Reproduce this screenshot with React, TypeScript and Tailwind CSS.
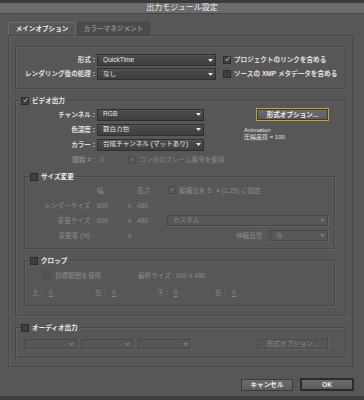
import React from 'react';
import clsx from 'clsx';

// Small building blocks of the dark dialog
const Arrow: React.FC<{ dim?: boolean }> = ({ dim }) => (
  <svg width="5" height="3" viewBox="0 0 5 3">
    <path d="M0 0 L5 0 L2.5 3 Z" fill={dim ? '#7a7a7a' : '#e8e8e8'} />
  </svg>
);

const Select: React.FC<{ value?: string; className: string; disabled?: boolean }> = ({ value, className, disabled }) => (
  <div
    className={clsx(
      'flex items-center border',
      disabled
        ? 'border-[#474747] text-[#8a8a8a] shadow-[1px_1px_0_#626262]'
        : 'border-[#2e2e2e] bg-gradient-to-b from-[#4b4b4b] to-[#3f3f3f] text-[#e8e8e8] shadow-[inset_0_1px_0_#565656]',
      className
    )}
  >
    <span className="flex-1 truncate pl-[5px] leading-none">{value}</span>
    <span className="flex h-full w-[10px] items-center justify-center">
      <Arrow dim={disabled} />
    </span>
  </div>
);

const Check: React.FC<{ checked?: boolean; disabled?: boolean }> = ({ checked, disabled }) => (
  <span
    className={clsx(
      'flex h-[8px] w-[8px] shrink-0 items-center justify-center border',
      disabled ? 'border-[#4c4c4c] bg-[#555555]' : 'border-[#2c2c2c] bg-[#3e3e3e]'
    )}
  >
    {checked && (
      <svg width="8" height="8" viewBox="0 0 8 8" className="-mt-[2px] ml-[1px]">
        <path d="M1 4 L3 6.5 L7.5 0.5" stroke={disabled ? '#8a8a8a' : '#e6e6e6'} strokeWidth="1.2" fill="none" />
      </svg>
    )}
  </span>
);

const Group: React.FC<{ legend?: string; checked?: boolean; className: string; children: React.ReactNode }> = ({
  legend,
  checked,
  className,
  children,
}) => (
  <div className={clsx('relative border border-[#474747] shadow-[inset_1px_1px_0_#616161,1px_1px_0_#616161]', className)}>
    {legend && (
      <div className="absolute -top-[5px] left-[5px] flex items-center gap-[3px] bg-[#575757] pr-[2px]">
        <Check checked={checked} />
        <span className="font-bold text-[#ececec]">{legend}</span>
      </div>
    )}
    {children}
  </div>
);

const Btn: React.FC<{ label: string; className: string; disabled?: boolean; focus?: boolean; gold?: boolean }> = ({
  label,
  className,
  disabled,
  focus,
  gold,
}) => (
  <div
    className={clsx(
      'flex items-center justify-center',
      disabled
        ? 'border border-[#4a4a4a] text-[#8a8a8a] shadow-[1px_1px_0_#626262]'
        : 'bg-gradient-to-b from-[#6c6c6c] to-[#5c5c5c] font-bold text-[#f0f0f0]',
      focus && 'border-2 border-[#2b2b2b]',
      gold && 'border border-[#3a3a3a] outline outline-1 outline-[#c9a030]',
      !disabled && !focus && !gold && 'border border-[#3a3a3a]',
      className
    )}
  >
    {label}
  </div>
);

export default function App() {
  return (
    <div className="flex h-[400px] w-[364px] flex-col overflow-hidden whitespace-nowrap bg-[#575757] font-['Liberation_Sans','Noto_Sans_CJK_JP',sans-serif] text-[6.6px] text-[#e0e0e0]">
      <div className="h-[3px] bg-[#3a3a3a]" />
      <div className="flex h-[11px] items-center justify-center border-b border-[#474747] bg-[#6b6b6b] text-[8px] text-[#f2f2f2]">
        出力モジュール設定
      </div>

      {/* tabs */}
      <div className="mt-[8px] flex h-[13px] pl-[8px]">
        <div className="flex w-[68px] items-center justify-center border-x border-t border-[#6a6a6a] bg-[#575757] font-bold text-[#f0f0f0]">
          メインオプション
        </div>
        <div className="ml-[1px] flex w-[73px] items-center justify-center border-x border-t border-[#444444] bg-[#4b4b4b] font-bold text-[#8e8e8e]">
          カラーマネジメント
        </div>
      </div>

      <div className="mx-[8px] flex h-[332px] w-[345px] flex-col border border-[#474747] px-[6px] pt-[10px] shadow-[inset_1px_1px_0_#636363]">
        {/* format */}
        <Group className="h-[43px] pt-[6px]">
          {[
            ['形式 :', 'QuickTime', 'プロジェクトのリンクを含める', true],
            ['レンダリング後の処理 :', 'なし', 'ソースの XMP メタデータを含める', false],
          ].map(([label, value, cb, on]) => (
            <div key={label as string} className="flex h-[14px] items-center">
              <span className="w-[79px] text-right font-bold">{label as string}</span>
              <Select value={value as string} className="ml-[2px] h-[12px] w-[119px]" />
              <div className="ml-[7px] flex items-center gap-[3px]">
                <Check checked={on as boolean} />
                <span className="font-bold">{cb as string}</span>
              </div>
            </div>
          ))}
        </Group>

        {/* video output */}
        <Group legend="ビデオ出力" checked className="mt-[11px] h-[216px] pt-[6px]">
          <div className="flex">
            <div className="flex w-[188px] shrink-0 flex-col">
              {[
                ['チャンネル :', 'RGB'],
                ['色深度 :', '数百万色'],
                ['カラー :', '合成チャンネル (マットあり)'],
              ].map(([label, value]) => (
                <div key={label} className="flex h-[15px] items-center">
                  <span className="w-[79px] text-right font-bold">{label}</span>
                  <Select value={value} className="ml-[2px] h-[12px] w-[107px]" />
                </div>
              ))}
              <div className="flex h-[15px] items-center text-[#8c8c8c]">
                <span className="w-[79px] shrink-0 text-right font-bold">開始 # :</span>
                <span className="ml-[2px] w-[31px] shrink-0 pl-[3px]">0</span>
                <Check checked disabled />
                <span className="ml-[3px]">コンポのフレーム番号を使用</span>
              </div>
            </div>
            <div className="ml-[40px] flex flex-col">
              <Btn label="形式オプション..." gold className="ml-[13px] mt-[2px] h-[11px] w-[71px]" />
              <div className="mt-[7px] text-[6px] leading-[7px] text-[#e4e4e4]">
                <div>Animation</div>
                <div>圧縮品質 = 100</div>
              </div>
            </div>
          </div>

          {/* resize */}
          <Group legend="サイズ変更" className="ml-[8px] mr-[10px] mt-[9px] h-[73px] pr-[6px] pt-[6px] text-[#8c8c8c]">
            <div className="flex h-[15px] items-center">
              <span className="w-[72px]" />
              <span className="w-[40px]">幅</span>
              <span className="w-[30px]">高さ</span>
              <span className="ml-[1px] flex items-center gap-[3px]">
                <Check checked disabled />
                縦横比を 5 : 4 (1.25) に固定
              </span>
            </div>
            <div className="flex h-[15px] items-center">
              <span className="w-[69px] text-right">レンダーサイズ :</span>
              <span className="ml-[3px] w-[31px]">600</span>
              <span className="w-[9px]">x</span>
              <span className="w-[30px]">480</span>
            </div>
            <div className="flex h-[15px] items-center">
              <span className="w-[69px] text-right">変更サイズ :</span>
              <span className="ml-[3px] w-[31px]">600</span>
              <span className="w-[9px]">x</span>
              <span className="w-[30px]">480</span>
              <Select value="カスタム" disabled className="h-[11px] w-[161px]" />
            </div>
            <div className="flex h-[15px] items-center">
              <span className="w-[69px] text-right">変更率 (%) :</span>
              <span className="ml-[3px] w-[31px]" />
              <span className="w-[9px]">x</span>
              <span className="flex-1 text-right">伸縮品質 :</span>
              <Select value="高" disabled className="ml-[4px] h-[11px] w-[58px]" />
            </div>
          </Group>

          {/* crop */}
          <Group legend="クロップ" className="ml-[8px] mr-[10px] mt-[11px] h-[46px] pt-[7px] text-[#8c8c8c]">
            <div className="flex h-[15px] items-center">
              <span className="ml-[18px] flex w-[95px] items-center gap-[4px]">
                <Check disabled />
                目標範囲を使用
              </span>
              <span>最終サイズ : 600 x 480</span>
            </div>
            <div className="mt-[2px] flex h-[15px] items-center pl-[7px]">
              {[
                ['上 :', 'w-[63px]'],
                ['左 :', 'w-[62px]'],
                ['下 :', 'w-[58px]'],
                ['右 :', 'w-[40px]'],
              ].map(([l, w]) => (
                <span key={l} className={clsx('flex', w)}>
                  <span className="w-[17px]">{l}</span>
                  <span className="underline">0</span>
                </span>
              ))}
            </div>
          </Group>
        </Group>

        {/* audio output */}
        <Group legend="オーディオ出力" className="mt-[11px] flex h-[31px] items-start pt-[11px]">
          <Select disabled className="ml-[8px] h-[10px] w-[53px]" />
          <Select disabled className="ml-[4px] h-[10px] w-[52px]" />
          <Select disabled className="ml-[5px] h-[10px] w-[53px]" />
          <Btn label="形式オプション..." disabled className="ml-[66px] h-[10px] w-[71px]" />
        </Group>
      </div>

      <div className="mt-[11px] flex justify-end gap-[7px] pr-[10px]">
        <Btn label="キャンセル" className="mt-[1px] h-[12px] w-[52px]" />
        <Btn label="OK" focus className="h-[13px] w-[54px]" />
      </div>
      <div className="flex-1" />
      <div className="h-[4px] bg-[#3e3e3e]" />
    </div>
  );
}
